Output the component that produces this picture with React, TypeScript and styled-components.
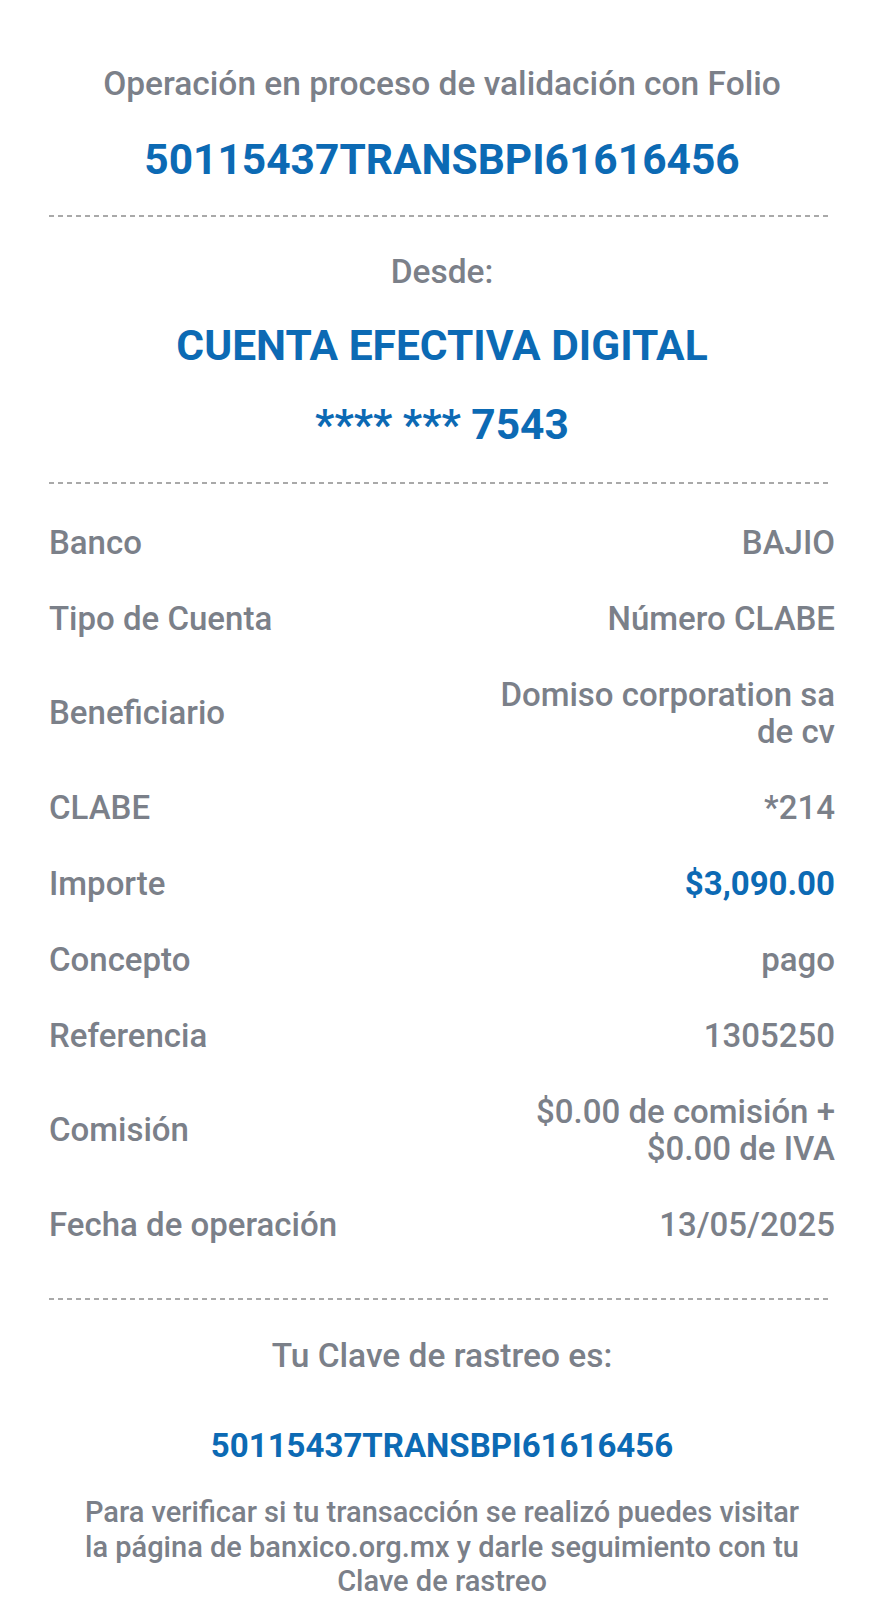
import React from "react";
import { styled, createGlobalStyle } from "styled-components";

const GlobalStyle = createGlobalStyle`
  body {
    margin: 0;
    background: #ffffff;
    font-family: Roboto, "Liberation Sans", sans-serif;
  }
`;

const rows = [
  { label: "Banco", value: "BAJIO" },
  { label: "Tipo de Cuenta", value: "Número CLABE" },
  { label: "Beneficiario", value: "Domiso corporation sa de cv" },
  { label: "CLABE", value: "*214" },
  { label: "Importe", value: "$3,090.00", blue: true },
  { label: "Concepto", value: "pago" },
  { label: "Referencia", value: "1305250" },
  { label: "Comisión", value: "$0.00 de comisión + $0.00 de IVA" },
  { label: "Fecha de operación", value: "13/05/2025" },
];

const folio = "50115437TRANSBPI61616456";

export default function App() {
  return (
    <>
      <GlobalStyle />
      <StPage>
        <StHeader>
          <StGrayTitle>Operación en proceso de validación con Folio</StGrayTitle>
          <StFolio>{folio}</StFolio>
        </StHeader>
        <StDivider />
        <StFrom>
          <StGrayTitle>Desde:</StGrayTitle>
          <StAccount>CUENTA EFECTIVA DIGITAL</StAccount>
          <StAccount>**** *** 7543</StAccount>
        </StFrom>
        <StDivider />
        <StDetails>
          {rows.map((r) => (
            <StRow key={r.label}>
              <StLabel>{r.label}</StLabel>
              <StValue $blue={r.blue}>{r.value}</StValue>
            </StRow>
          ))}
        </StDetails>
        <StDivider />
        <StTracking>
          <StGrayTitle>Tu Clave de rastreo es:</StGrayTitle>
          <StCode>{folio}</StCode>
          <StNote>
            Para verificar si tu transacción se realizó puedes visitar la
            página de banxico.org.mx y darle seguimiento con tu Clave de
            rastreo
          </StNote>
        </StTracking>
      </StPage>
    </>
  );
}

const StPage = styled.div`
  width: 883px;
  box-sizing: border-box;
  padding: 0 48px 0 49px;
  display: flex;
  flex-direction: column;
`;

const StHeader = styled.div`
  display: flex;
  flex-direction: column;
  align-items: center;
  row-gap: 31px;
  padding: 64px 0 30px;
`;

const StGrayTitle = styled.div`
  font-size: 33.5px;
  font-weight: 500;
  line-height: 40px;
  color: #7b8089;
  text-align: center;
`;

const StFolio = styled.div`
  font-size: 42.5px;
  font-weight: 700;
  line-height: 50px;
  color: #0c6ab4;
`;

const StDivider = styled.div`
  height: 2px;
  margin-right: 3px;
  background: repeating-linear-gradient(
    to right,
    #a9a9a9 0 5px,
    transparent 5px 9px
  );
`;

const StFrom = styled.div`
  display: flex;
  flex-direction: column;
  align-items: center;
  padding: 35px 0 32px;

  & > div + div {
    margin-top: 29px;
  }
`;

const StAccount = styled.div`
  font-size: 42.5px;
  font-weight: 700;
  line-height: 50px;
  color: #0c6ab4;
`;

const StDetails = styled.div`
  display: flex;
  flex-direction: column;
  padding: 20px 0 36px;
`;

const StRow = styled.div`
  display: flex;
  justify-content: space-between;
  align-items: center;
  min-height: 76px;
  padding: 19.5px 0;
  box-sizing: border-box;
  font-size: 33px;
  font-weight: 500;
  line-height: 37px;
`;

const StLabel = styled.div`
  color: #7b8089;
`;

const StValue = styled.div<{ $blue?: boolean }>`
  max-width: 355px;
  text-align: right;
  color: ${(p) => (p.$blue ? "#0c6ab4" : "#7b8089")};
  font-weight: ${(p) => (p.$blue ? 700 : 500)};
`;

const StTracking = styled.div`
  display: flex;
  flex-direction: column;
  align-items: center;
  padding-top: 36px;
`;

const StCode = styled.div`
  margin-top: 50px;
  font-size: 33px;
  font-weight: 700;
  line-height: 40px;
  color: #0c6ab4;
`;

const StNote = styled.div`
  margin-top: 29px;
  padding: 0 30px;
  font-size: 29px;
  font-weight: 500;
  line-height: 34.5px;
  color: #7b8089;
  text-align: center;
`;
